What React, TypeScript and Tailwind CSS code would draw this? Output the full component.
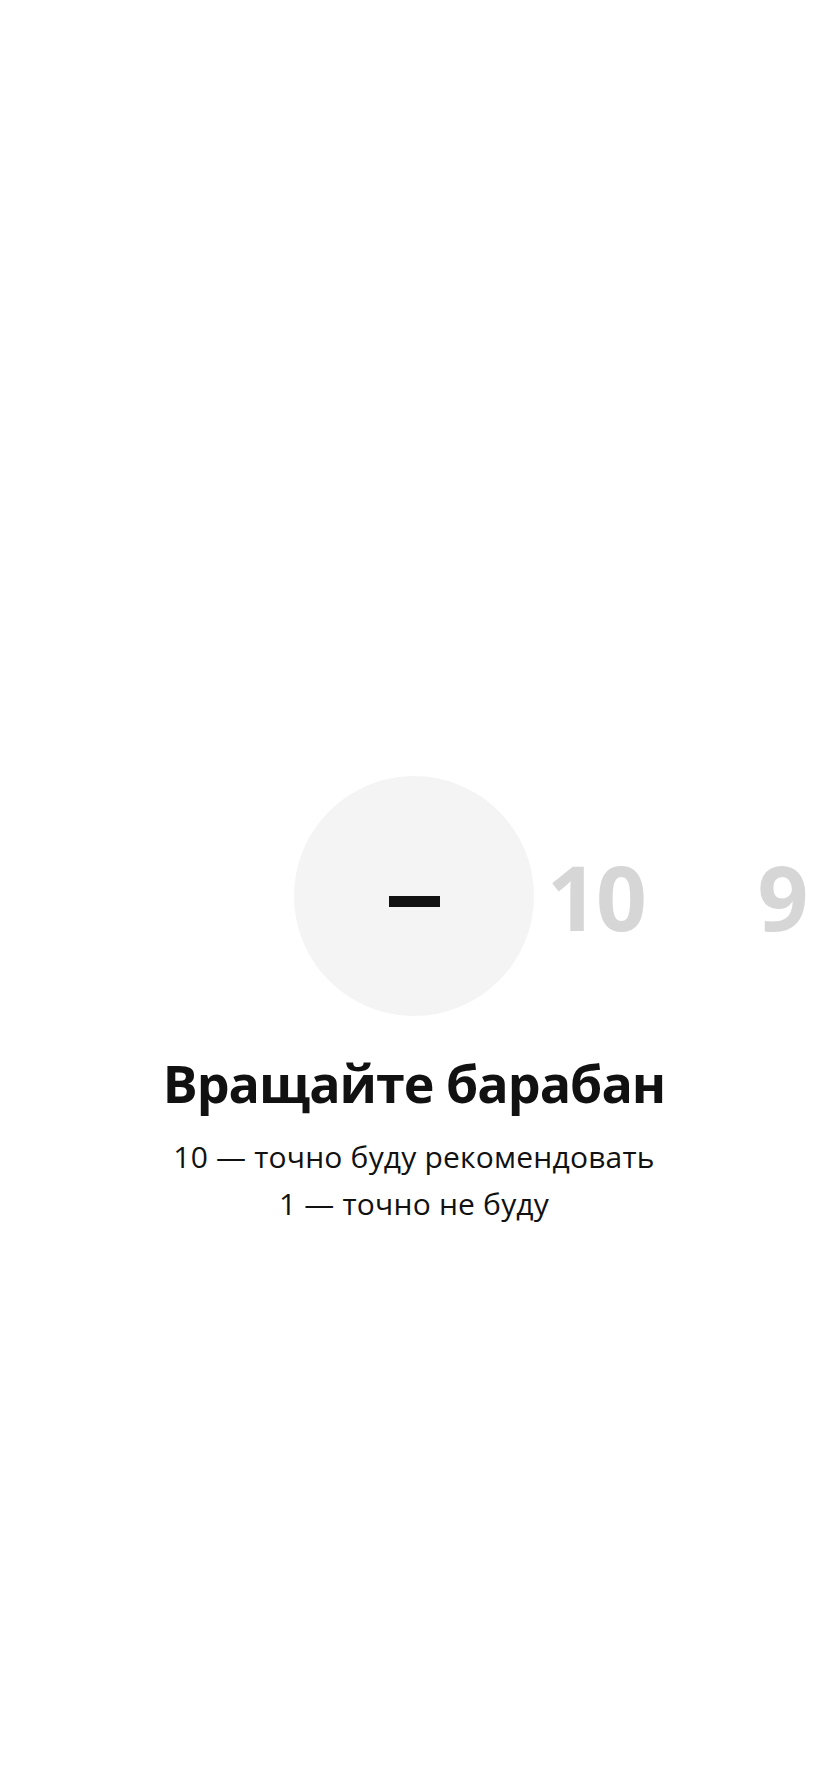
import React from "react";

export default function App() {
  const items = ["10", "9"];
  return (
    <div
      className="w-[828px] h-[1792px] bg-white overflow-hidden flex flex-col items-center pt-[776px]"
      style={{ fontFamily: '"Open Sans", "Noto Sans", sans-serif' }}
    >
      <div className="w-full overflow-hidden">
        <div className="flex flex-row pl-[321px] h-[240px] items-center">
          <div className="relative w-[182px] h-[240px] shrink-0 flex items-center justify-center">
            <div className="absolute left-[-27px] top-0 w-[240px] h-[240px] rounded-full bg-[#f4f4f4]" />
            <div className="relative w-[51px] h-[11px] bg-[#111111] mt-[10px] ml-[4px]" />
          </div>
          {items.map((n) => (
            <div
              key={n}
              className="w-[186px] shrink-0 flex items-center justify-center text-[89px] leading-none font-bold text-[#d6d6d6] tracking-[-2px]"
            >
              {n}
            </div>
          ))}
        </div>
      </div>
      <h1 className="mt-[37px] text-[52px] leading-[60px] font-bold text-[#111111] tracking-[-1px]">
        Вращайте барабан
      </h1>
      <div className="mt-[20px] text-[30px] leading-[47px] text-[#111111] text-center tracking-[0.2px]">
        <div>10 — точно буду рекомендовать</div>
        <div>1 — точно не буду</div>
      </div>
    </div>
  );
}
